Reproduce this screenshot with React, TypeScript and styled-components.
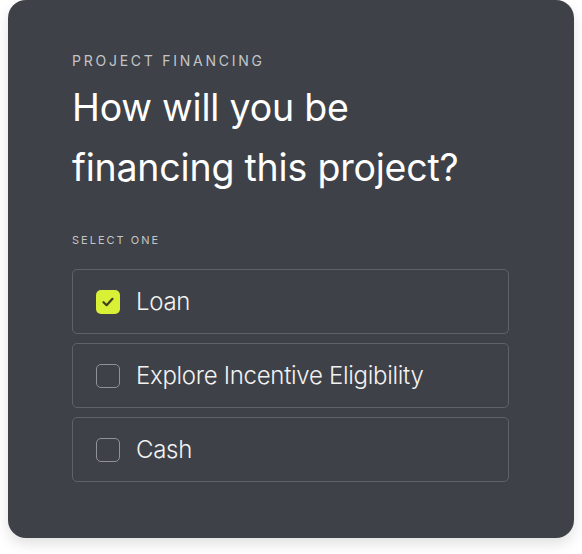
import React, { useState } from "react";
import styled, { createGlobalStyle } from "styled-components";

const Global = createGlobalStyle`
  html, body { margin: 0; padding: 0; background: #ffffff; }
  body { font-family: Inter, "Noto Sans", sans-serif; -webkit-font-smoothing: antialiased; }
`;

const Page = styled.div`
  padding: 0 8px 16px 8px;
`;

const Card = styled.section`
  box-sizing: border-box;
  width: 566px;
  height: 538px;
  background: #3e4147;
  border-radius: 18px;
  box-shadow: 0 6px 14px rgba(0, 0, 0, 0.12);
  padding: 52px 64px 0 64px;
  display: flex;
  flex-direction: column;
`;

const Eyebrow = styled.div`
  font-size: 14px;
  letter-spacing: 2.75px;
  color: #c3c5c9;
  line-height: 18px;
  text-transform: uppercase;
`;

const Heading = styled.h1`
  margin: 8px 0 0 0;
  font-size: 37.5px;
  font-weight: 400;
  line-height: 60px;
  color: #ffffff;
  letter-spacing: -0.2px;
`;

const SubLabel = styled.div`
  margin-top: 35px;
  font-size: 11px;
  letter-spacing: 2px;
  color: #c3c5c9;
  line-height: 14px;
`;

const Options = styled.div`
  margin-top: 22px;
  display: flex;
  flex-direction: column;
  gap: 9px;
  width: 437px;
`;

const Option = styled.label`
  box-sizing: border-box;
  height: 65px;
  border: 1.5px solid #5f6268;
  border-radius: 5px;
  display: flex;
  align-items: center;
  gap: 16px;
  padding: 0 0 0 23px;
  cursor: pointer;
`;

const Box = styled.span<{ $checked: boolean }>`
  box-sizing: border-box;
  width: 24px;
  height: 24px;
  border-radius: 5px;
  border: ${(p) => (p.$checked ? "none" : "1.5px solid #909298")};
  background: ${(p) => (p.$checked ? "#d8f036" : "transparent")};
  display: flex;
  align-items: center;
  justify-content: center;
  flex-shrink: 0;
`;

const Text = styled.span`
  font-size: 24px;
  font-weight: 300;
  color: #f2f2f2;
  letter-spacing: -0.3px;
`;

const options = ["Loan", "Explore Incentive Eligibility", "Cash"];

export default function App() {
  const [sel, setSel] = useState(0);
  return (
    <Page>
      <Global />
      <Card>
        <Eyebrow>Project Financing</Eyebrow>
        <Heading>
          How will you be
          <br />
          financing this project?
        </Heading>
        <SubLabel>SELECT ONE</SubLabel>
        <Options>
          {options.map((o, i) => (
            <Option key={o} onClick={() => setSel(i)}>
              <Box $checked={sel === i}>
                {sel === i && (
                  <svg width="14" height="14" viewBox="0 0 14 14">
                    <path d="M2.5 7.2 L5.6 10.2 L11.5 3.8" fill="none" stroke="#3b3e24" strokeWidth="2.2" strokeLinecap="round" strokeLinejoin="round" />
                  </svg>
                )}
              </Box>
              <Text>{o}</Text>
            </Option>
          ))}
        </Options>
      </Card>
    </Page>
  );
}
